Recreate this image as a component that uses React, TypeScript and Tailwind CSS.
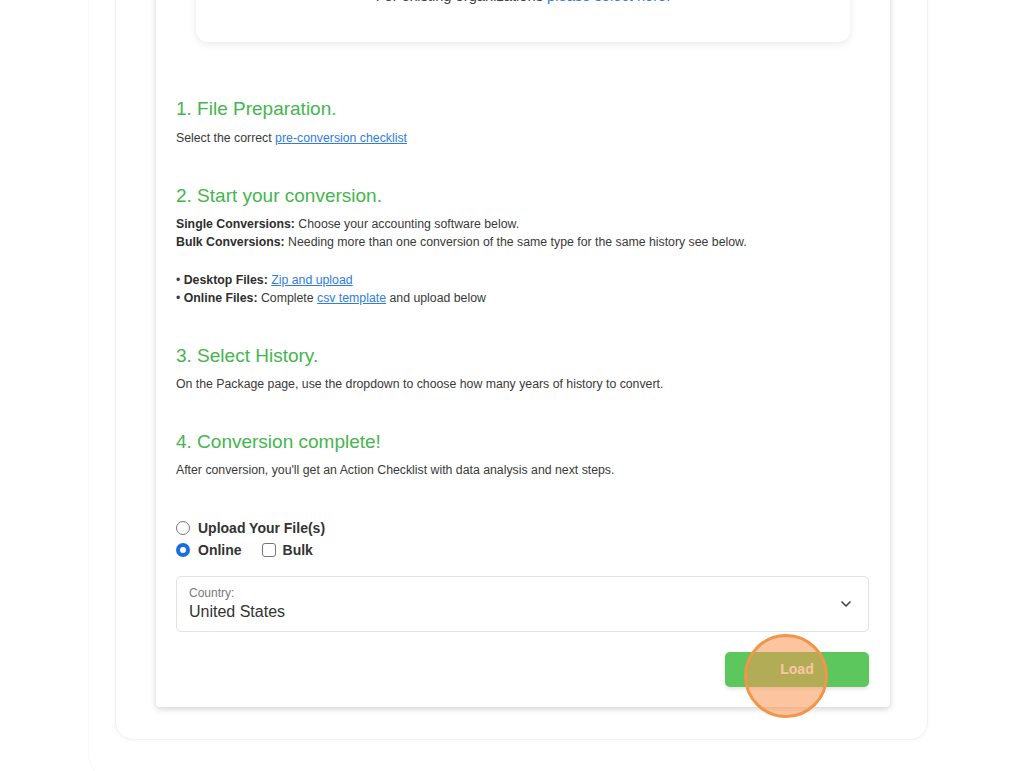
import { ChevronDown } from "lucide-react";

const font = { fontFamily: '"Liberation Sans", Arial, sans-serif' };

const headingClassName = "text-[19px] leading-[24px] text-[#45b54e]";
const textClassName = "mt-[7px] text-[12.3px] leading-[18px] text-[#3a3a3a]";
const linkClassName = "text-[#2f7de1] underline";

function Step({ title, children }: { title: string; children: React.ReactNode }) {
  return (
    <section className="mt-[37px]">
      <h2 className={headingClassName}>{title}</h2>
      <div className={textClassName}>{children}</div>
    </section>
  );
}

export default function App() {
  return (
    <div className="h-[771px] overflow-hidden bg-white" style={font}>
      <div className="ml-[88px] mr-[96px] -mt-[80px] h-[862px] rounded-bl-[28px] border-b border-l border-[#f8f8f8]">
        <div className="ml-[26px] rounded-b-[18px] border border-[#f1f1f1] bg-white pb-[32px] pl-[40px] pr-[37px] shadow-[0_1px_4px_rgba(0,0,0,0.03)]">
          <div className="rounded-b-[4px] bg-white pb-[20px] pl-[20px] pr-[21px] shadow-[0_2px_6px_rgba(0,0,0,0.18)]">
            <div className="ml-[20px] mr-[19px] rounded-b-[12px] bg-white pb-[37px] pt-[66px] text-center shadow-[0_2px_8px_rgba(0,0,0,0.09)]">
              <p className="text-[14.7px] leading-[18px] text-[#444]">
                For existing organizations <span className="text-[#2f7de1]">please select here.</span>
              </p>
            </div>

            <section className="mt-[55px]">
              <h2 className={headingClassName}>1. File Preparation.</h2>
              <div className="mt-[8px] text-[12.3px] leading-[18px] text-[#3a3a3a]">
                Select the correct <a className={linkClassName}>pre-conversion checklist</a>
              </div>
            </section>

            <Step title="2. Start your conversion.">
              <p>
                <b className="text-[#2e2e2e]">Single Conversions:</b> Choose your accounting software below.
              </p>
              <p>
                <b className="text-[#2e2e2e]">Bulk Conversions:</b> Needing more than one conversion of the same type for
                the same history see below.
              </p>
              <p className="mt-[20px]">
                • <b className="text-[#2e2e2e]">Desktop Files:</b> <a className={linkClassName}>Zip and upload</a>
              </p>
              <p>
                • <b className="text-[#2e2e2e]">Online Files:</b> Complete <a className={linkClassName}>csv template</a> and
                upload below
              </p>
            </Step>

            <Step title="3. Select History.">
              On the Package page, use the dropdown to choose how many years of history to convert.
            </Step>

            <Step title="4. Conversion complete!">
              After conversion, you'll get an Action Checklist with data analysis and next steps.
            </Step>

            <div className="mt-[38px] text-[14px] font-bold leading-[22px] text-[#333]">
              <label className="flex items-center gap-[8px]">
                <span className="h-[14px] w-[14px] rounded-full border border-[#767676] bg-white" />
                Upload Your File(s)
              </label>
              <div className="flex items-center">
                <label className="flex items-center gap-[8px]">
                  <span className="flex h-[14px] w-[14px] items-center justify-center rounded-full bg-[#1a6fe0]">
                    <span className="h-[6px] w-[6px] rounded-full bg-white" />
                  </span>
                  Online
                </label>
                <label className="ml-[20px] flex items-center gap-[7px]">
                  <span className="h-[14px] w-[14px] rounded-[3px] border border-[#767676] bg-white" />
                  Bulk
                </label>
              </div>
            </div>

            <div className="mt-[15px] flex h-[56px] items-center justify-between rounded-[5px] border border-[#e3e3e3] bg-white pl-[12px] pr-[14px]">
              <div>
                <div className="text-[12px] leading-[15px] text-[#7a7a7a]">Country:</div>
                <div className="text-[16px] leading-[21px] text-[#333]">United States</div>
              </div>
              <ChevronDown className="h-[16px] w-[16px] text-[#444]" strokeWidth={2.5} />
            </div>

            <div className="mt-[20px] flex justify-end">
              <div className="relative">
                <button className="h-[35px] w-[144px] rounded-[5px] bg-[#5bc75d] text-[14px] font-bold text-white shadow-[0_2px_4px_rgba(0,0,0,0.12)]">
                  Load
                </button>
                <span className="pointer-events-none absolute left-[19px] top-[-18px] h-[84px] w-[84px] rounded-full border-[3px] border-[#f2954a] bg-[rgba(250,150,80,0.55)]" />
              </div>
            </div>
          </div>
        </div>
      </div>
    </div>
  );
}
